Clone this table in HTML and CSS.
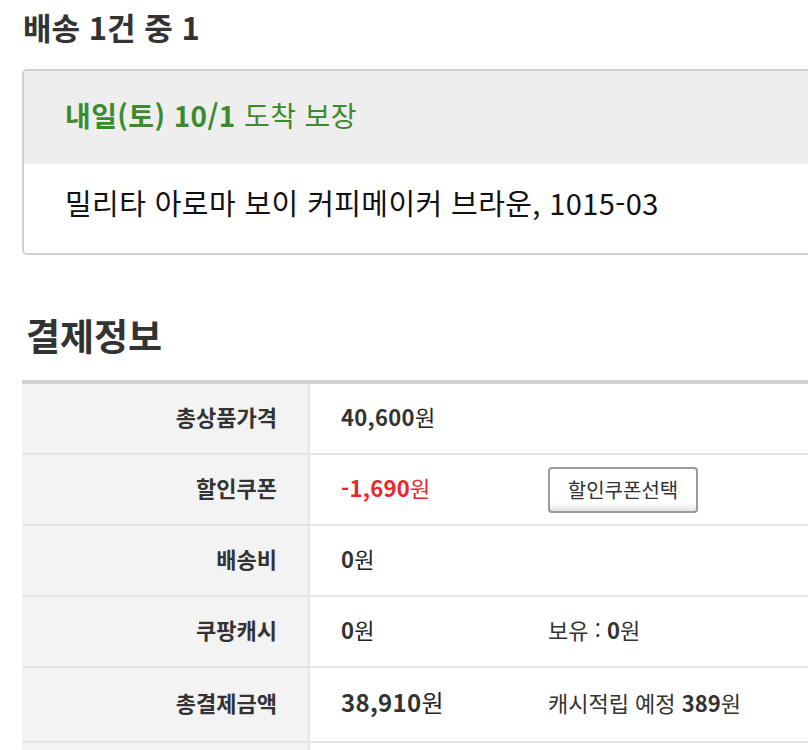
FILE: index.html
```html
<!DOCTYPE html>
<html lang="ko">
<head>
<meta charset="utf-8">
<link rel="stylesheet" href="styles.css">
</head>
<body>
<main class="page">
  <h2 class="title">배송 1건 중 1</h2>
  <section class="ship-box">
    <div class="ship-head"><span><strong>내일(토) 10/1</strong> 도착 보장</span></div>
    <div class="ship-body"><span>밀리타 아로마 보이 커피메이커 브라운, 1015-03</span></div>
  </section>

  <h2 class="pay-title">결제정보</h2>
  <div class="pay-table">
    <div class="row">
      <div class="label">총상품가격</div>
      <div class="value"><span><b>40,600</b>원</span></div>
      <div class="extra"></div>
    </div>
    <div class="row">
      <div class="label">할인쿠폰</div>
      <div class="value red"><span><b>-1,690</b>원</span></div>
      <div class="extra"><button class="coupon-btn" type="button">할인쿠폰선택</button></div>
    </div>
    <div class="row">
      <div class="label">배송비</div>
      <div class="value"><span><b>0</b>원</span></div>
      <div class="extra"></div>
    </div>
    <div class="row">
      <div class="label">쿠팡캐시</div>
      <div class="value"><span><b>0</b>원</span></div>
      <div class="extra"><span>보유 : <b>0</b>원</span></div>
    </div>
    <div class="row row-total">
      <div class="label">총결제금액</div>
      <div class="value big"><span><b>38,910</b>원</span></div>
      <div class="extra"><span>캐시적립 예정 <b>389</b>원</span></div>
    </div>
    <div class="row row-last">
      <div class="label"></div>
      <div class="value"></div>
      <div class="extra"></div>
    </div>
  </div>
</main>
</body>
</html>
```

FILE: styles.css
```css
html, body {
  margin: 0;
  padding: 0;
  background: #fff;
  overflow: hidden;
}
body {
  font-family: "Noto Sans CJK KR", "Noto Sans", sans-serif;
  color: #333;
}
.page {
  width: 840px;
  padding-left: 22px;
}
.title {
  margin: 0;
  padding-top: 6px;
  padding-left: 1px;
  font-size: 31px;
  line-height: 42px;
  font-weight: 700;
  color: #333;
  height: 63px;
}
.ship-box {
  border: 2px solid #d0d0d0;
  border-radius: 5px;
  overflow: hidden;
}
.ship-head {
  background: #eeeeee;
  height: 93px;
  box-sizing: border-box;
  display: flex;
  align-items: center;
  padding-left: 41px;
  padding-bottom: 6px;
  font-size: 28px;
  letter-spacing: 0.4px;
  color: #3b8b2e;
  white-space: pre;
}
.ship-head strong {
  font-weight: 700;
}
.ship-body {
  height: 89px;
  box-sizing: border-box;
  display: flex;
  align-items: center;
  padding-left: 41px;
  padding-bottom: 14px;
  font-size: 29px;
  letter-spacing: 0.4px;
  color: #111;
}
.pay-title {
  margin: 0;
  padding-left: 4px;
  padding-top: 55px;
  height: 70px;
  font-size: 37px;
  line-height: 50px;
  font-weight: 700;
  color: #333;
}
.pay-table {
  border-top: 4px solid #cfcfcf;
}
.row {
  display: grid;
  grid-template-columns: 288px 238px 1fr;
  height: 71px;
  box-sizing: border-box;
  border-bottom: 2px solid #e4e4e4;
}
.row-total {
  height: 75px;
}
.label,
.value,
.extra {
  padding-bottom: 6px;
}
.label {
  background: #f3f3f3;
  border-right: 2px solid #e4e4e4;
  display: flex;
  align-items: center;
  justify-content: flex-end;
  padding-right: 31px;
  font-size: 22px;
  font-weight: 700;
  color: #333;
}
.value {
  display: flex;
  align-items: center;
  padding-left: 31px;
  font-size: 22px;
  letter-spacing: 0.3px;
  color: #222;
}
.value b {
  font-weight: 700;
  color: #333;
}
.value.red,
.value.red b {
  color: #e8262b;
}
.value.big {
  font-size: 24px;
}
.extra {
  display: flex;
  align-items: center;
  font-size: 22px;
  color: #333;
}
.extra b {
  font-weight: 700;
}
.coupon-btn {
  width: 150px;
  height: 46px;
  margin-top: 6px;
  border: 2px solid #9a9a9a;
  border-radius: 4px;
  background: linear-gradient(to bottom, #fff 0, #fff 80%, #e3e3e3 100%);
  font-family: inherit;
  font-size: 20px;
  color: #333;
  padding: 0;
}
```
